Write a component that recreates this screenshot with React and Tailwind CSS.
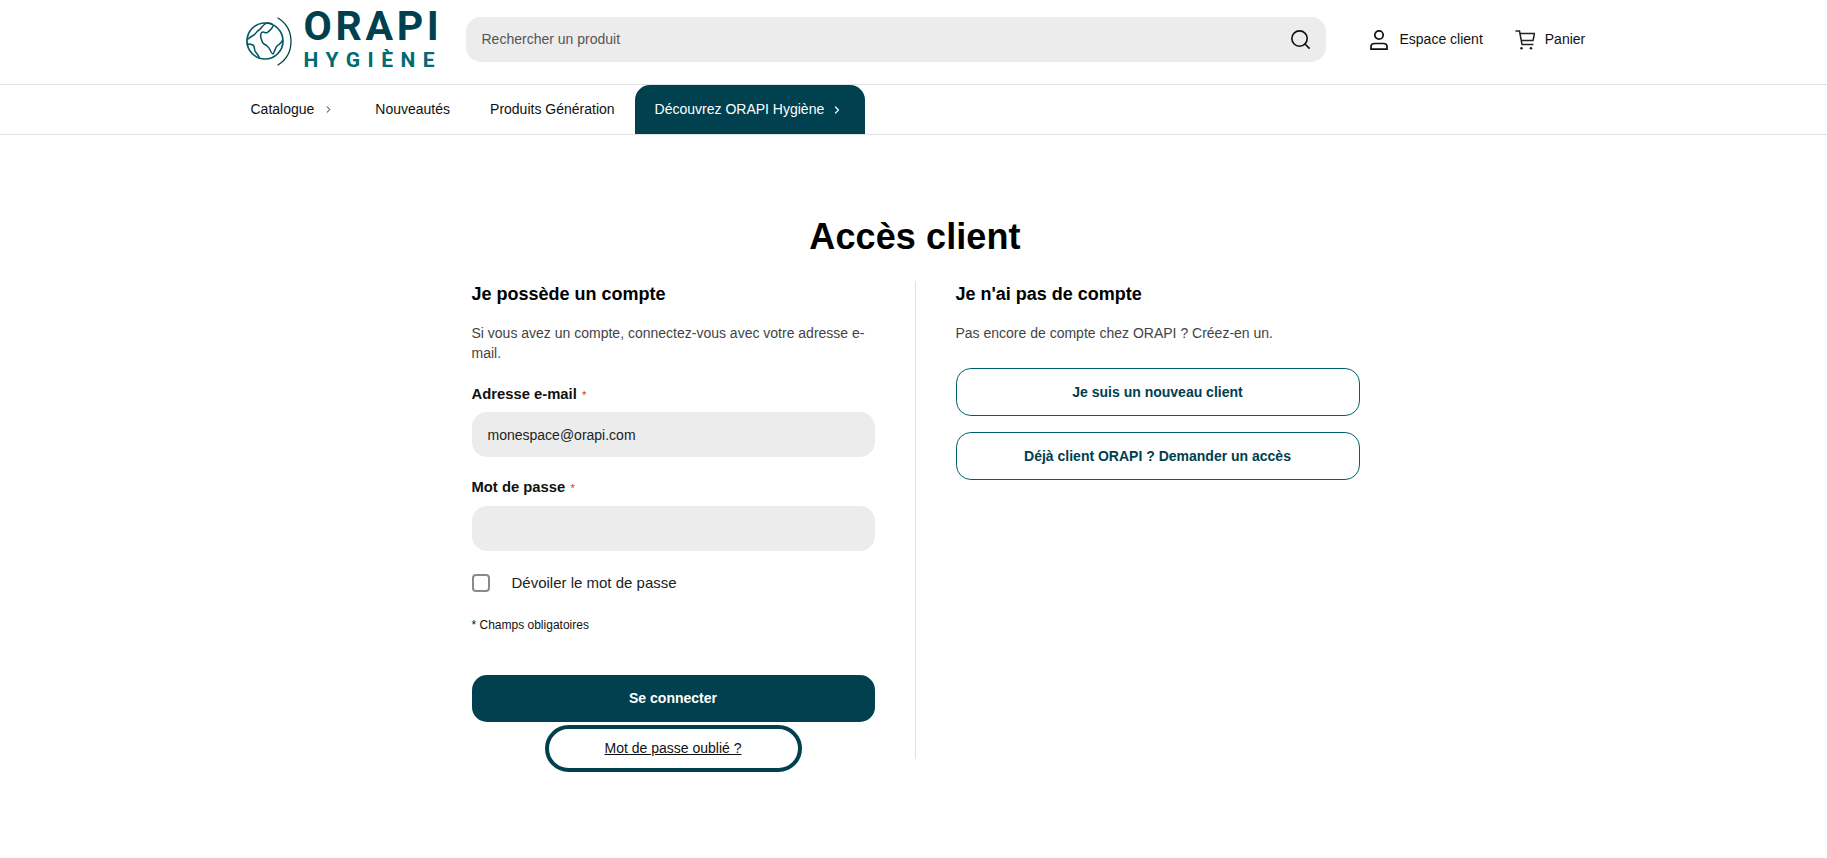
import { ChevronRight, Search } from "lucide-react";

const font = { fontFamily: '"Liberation Sans", Arial, sans-serif' };

function Logo() {
  return (
    <div className="ml-[1px] flex shrink-0 items-center">
      <svg width="48" height="50" viewBox="0 0 48 50" fill="none" stroke="#00505e" strokeWidth="1.5" strokeLinecap="round" strokeLinejoin="round" className="mt-[5px] shrink-0">
        <circle cx="20" cy="24" r="18" stroke="#005a68" strokeWidth="1.7" />
        <path d="M33 1c8 5 13 13 13 23.500s-5 18.500-13 23.500" stroke="#00404f" strokeWidth="1.3" />
        <path d="M28 9c-1 3-3 4-5 6s-3 0-5 0-3 3-2 6 1 5 3 6 4 2 5 4 3 6 4 6 2-6 4-8 4-2 5-5" />
        <path d="M3 22c2-2 5-3 7-5s2-3 4-4 3-4 6-6 5-1 7 0" />
        <path d="M2 27c2 0 4 0 6 1s1 4 2 6 3 3 4 6" />
      </svg>
      <div className="ml-[11px] flex flex-col" style={{ fontFamily: "Roboto, sans-serif" }}>
        <span className="text-[41px] leading-[32px] font-bold tracking-[3.7px] text-[#00404f]">ORAPI</span>
        <span className="mt-[9px] text-[21px] leading-[18px] font-bold tracking-[7.5px] text-[#006a75]">HYGIÈNE</span>
      </div>
    </div>
  );
}

function UserIcon() {
  return (
    <svg width="20" height="22" viewBox="0 0 20 22" fill="none" stroke="#111" strokeWidth="1.7">
      <circle cx="10" cy="6" r="4.200" />
      <path d="M2 20.200v-2.400c0-2 1.600-3.300 3.500-3.300h9c1.900 0 3.500 1.300 3.500 3.300v2.400z" />
    </svg>
  );
}

function CartIcon() {
  return (
    <svg width="20" height="20" viewBox="0 0 20 20" fill="none" stroke="#222" strokeWidth="1.5">
      <path d="M0.500 1H4.500L7 14.500H18.500" />
      <path d="M5 3.500H19.500L18 10.500H6.500" />
      <circle cx="6.500" cy="18.200" r="1.300" fill="#222" stroke="none" />
      <circle cx="16" cy="18.200" r="1.300" fill="#222" stroke="none" />
    </svg>
  );
}

function Field({ label, value, className, gap }) {
  return (
    <div className={className}>
      <label className="block text-[14.8px] leading-[20px] font-bold text-[#111]">
        {label} <span className="ml-[1px] text-[11px] font-normal text-[#c0392b]">*</span>
      </label>
      <div className={`${gap} flex h-[45px] items-center rounded-[15px] bg-[#ececec] px-4 pt-[2px] text-[14px] text-[#222]`}>
        {value}
      </div>
    </div>
  );
}

export default function App() {
  return (
    <div className="min-h-[858px] bg-white" style={font}>
      <header className="h-[85px] border-b border-[#e2e2e2]">
        <div className="mx-auto flex h-full w-[1340px] items-center pb-[5px]">
          <Logo />
          <div className="ml-[23px] flex h-[45px] w-[860px] shrink-0 items-center justify-between rounded-[15px] bg-[#ececec] pr-[14px] pl-[16px]">
            <span className="text-[14px] text-[#555]">Rechercher un produit</span>
            <Search size={23} strokeWidth={1.7} color="#111" />
          </div>
          <div className="ml-[43px] flex shrink-0 items-center gap-[11px] text-[14px] whitespace-nowrap text-[#111]">
            <UserIcon />
            <span>Espace client</span>
          </div>
          <div className="ml-[32px] flex shrink-0 items-center gap-[10px] text-[14px] text-[#111]">
            <CartIcon />
            <span>Panier</span>
          </div>
        </div>
      </header>

      <nav className="h-[50px] border-b border-[#e2e2e2]">
        <div className="mx-auto flex h-full w-[1340px] items-center pl-[7px] text-[14px] text-[#111]">
          <span className="flex items-center gap-[9px]">
            Catalogue <ChevronRight size={11} strokeWidth={2} />
          </span>
          <span className="ml-[41px]">Nouveautés</span>
          <span className="ml-[40px]">Produits Génération</span>
          <span className="ml-[20px] flex h-[49px] items-center gap-[7px] rounded-t-[15px] bg-[#00404f] pr-[22px] pl-[20px] text-white">
            Découvrez ORAPI Hygiène <ChevronRight size={12} strokeWidth={2.4} />
          </span>
        </div>
      </nav>

      <main className="mx-auto w-[884px] pt-[80px]">
        <h1 className="pl-[3px] text-center text-[36px] leading-[44px] font-bold tracking-[0.1px] text-black">Accès client</h1>
        <div className="mt-[22px] grid grid-cols-[444px_1fr] grid-rows-[478px]">
          <section className="border-r border-[#e2e2e2] pt-[1px]">
            <div className="w-[403px]">
              <h2 className="text-[18px] leading-[24px] font-bold text-black">Je possède un compte</h2>
              <p className="mt-[17px] text-[14px] leading-[20px] text-[#444]">
                Si vous avez un compte, connectez-vous avec votre adresse e-mail.
              </p>
              <Field className="mt-[21px]" gap="mt-[7px]" label="Adresse e-mail" value="monespace@orapi.com" />
              <Field className="mt-[20px]" gap="mt-[8px]" label="Mot de passe" value="" />
              <label className="mt-[21px] flex items-center gap-[22px] text-[15px] leading-[22px] text-[#222]">
                <span className="h-[18px] w-[18px] rounded-[4px] border-2 border-[#8a8a8a] bg-white" />
                Dévoiler le mot de passe
              </label>
              <p className="mt-[23px] text-[12px] leading-[16px] text-[#111]">* Champs obligatoires</p>
              <button className="mt-[42px] h-[47px] w-full rounded-[15px] bg-[#00404f] text-[14px] font-bold text-white">
                Se connecter
              </button>
              <div className="mt-[3px] flex justify-center">
                <a className="flex h-[47px] w-[257px] items-center justify-center rounded-full border-4 border-[#00404f] text-[14px] text-[#111] underline">
                  Mot de passe oublié ?
                </a>
              </div>
            </div>
          </section>
          <section className="pt-[1px] pl-[40px]">
            <h2 className="text-[18px] leading-[24px] font-bold text-black">Je n'ai pas de compte</h2>
            <p className="mt-[17px] text-[14px] leading-[21px] text-[#444]">
              Pas encore de compte chez ORAPI ? Créez-en un.
            </p>
            <button className="mt-[24px] h-[48px] w-[404px] rounded-[15px] border border-[#005f6b] text-[14px] font-bold text-[#00404f]">
              Je suis un nouveau client
            </button>
            <button className="mt-[16px] h-[48px] w-[404px] rounded-[15px] border border-[#005f6b] text-[14px] font-bold text-[#00404f]">
              Déjà client ORAPI ? Demander un accès
            </button>
          </section>
        </div>
      </main>
    </div>
  );
}
